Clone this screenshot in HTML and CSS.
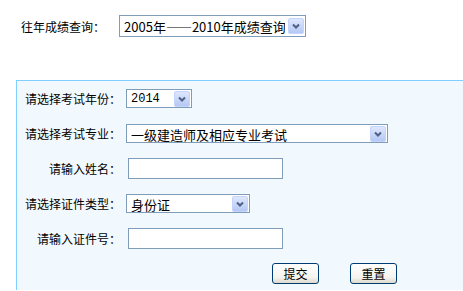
FILE: index.html
```html
<!DOCTYPE html>
<html lang="zh-CN">
<head>
  <meta charset="UTF-8" />
  <title>成绩查询</title>
  <link rel="stylesheet" href="styles.css">
</head>
<body>
  <div class="history">
    <span>往年成绩查询：</span>
    <select class="history-select">
      <option>2005年——2010年成绩查询</option>
    </select>
  </div>

  <form class="panel">
    <div class="row">
      <label>请选择考试年份：</label>
      <select class="year"><option>2014</option></select>
    </div>
    <div class="row">
      <label>请选择考试专业：</label>
      <select class="major"><option>一级建造师及相应专业考试</option></select>
    </div>
    <div class="row">
      <label>请输入姓名：</label>
      <input type="text" class="field" />
    </div>
    <div class="row">
      <label>请选择证件类型：</label>
      <select class="idtype"><option>身份证</option></select>
    </div>
    <div class="row">
      <label>请输入证件号：</label>
      <input type="text" class="field" />
    </div>
    <div class="row">
      <span></span>
      <div class="actions">
        <button type="button">提交</button>
        <button type="reset">重置</button>
      </div>
    </div>
  </form>
</body>
</html>
```

FILE: styles.css
```css
body {
  margin: 0;
  font-family: "Noto Sans CJK SC", sans-serif;
  font-size: 12px;
  color: #000;
  background: #fff;
  overflow: hidden;
}

select {
  -webkit-appearance: none;
  appearance: none;
  font-family: "Noto Sans CJK SC", sans-serif;
  font-size: 13px;
  color: #000;
  background-color: #fff;
  background-image: url("data:image/svg+xml,%3Csvg xmlns='http://www.w3.org/2000/svg' width='16' height='16'%3E%3Cdefs%3E%3ClinearGradient id='g' x1='0' y1='0' x2='0' y2='1'%3E%3Cstop offset='0' stop-color='%23dfe8fd'/%3E%3Cstop offset='1' stop-color='%23b4c7f4'/%3E%3C/linearGradient%3E%3C/defs%3E%3Crect x='0.5' y='0.5' width='15' height='15' rx='1.5' fill='url(%23g)' stroke='%23c4d4fb'/%3E%3Cpath d='M5 6.5l3 3 3-3' fill='none' stroke='%234d6185' stroke-width='2'/%3E%3C/svg%3E");
  background-repeat: no-repeat;
  background-position: right 1px center;
  border: 1px solid #7f9db9;
  border-radius: 0;
  padding: 0 20px 0 4px;
  margin: 0;
  outline: none;
}

.history {
  display: flex;
  align-items: center;
  gap: 14px;
  margin: 15px 0 0 21px;
}

.history-select {
  width: 187px;
  height: 22px;
}

/* panel runs off the right and bottom edges, so no border there */
.panel {
  margin: 43px 0 0 16px;
  height: calc(100vh - 81px);
  box-sizing: border-box;
  border-top: 1px solid #7fd0ff;
  border-left: 1px solid #7fd0ff;
  background: #f2f9fe;
}

.row {
  display: grid;
  grid-template-columns: 104px 1fr;
  column-gap: 5px;
  align-items: center;
  height: 35px;
}

.row label {
  text-align: right;
}

.year {
  width: 66px;
  height: 19px;
  font-family: "Liberation Mono", monospace;
  font-size: 12px;
}

.major {
  width: 262px;
  height: 19px;
}

.idtype {
  width: 124px;
  height: 19px;
}

.field {
  width: 155px;
  height: 21px;
  box-sizing: border-box;
  margin-left: 2px;
  border: 1px solid #7f9db9;
  background: #fff;
  padding: 0 3px;
  outline: none;
}

.actions {
  display: flex;
  gap: 31px;
  margin-left: 146px;
}

.actions button {
  width: 47px;
  height: 21px;
  padding: 0;
  font-family: "Noto Sans CJK SC", sans-serif;
  font-size: 12px;
  color: #000;
  border: 1px solid #003c74;
  border-radius: 3px;
  background: linear-gradient(#ffffff, #f5f4ee 70%, #dcd9cd);
  cursor: pointer;
}
```
